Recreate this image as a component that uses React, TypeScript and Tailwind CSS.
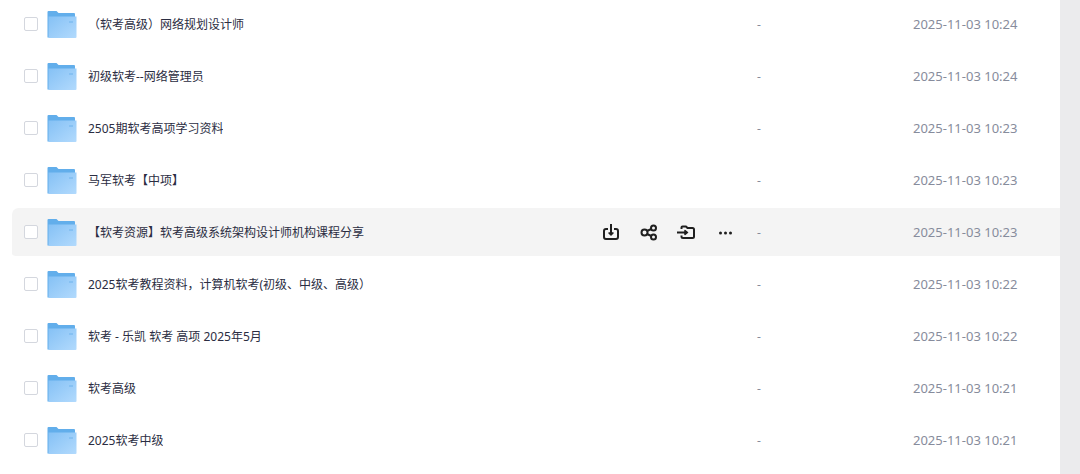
import { useState } from 'react';

interface FileItem {
    id: number
    name: string
    size: string
    date: string
}

const files: FileItem[] = [
    { id: 1, name: '（软考高级）网络规划设计师', size: '-', date: '2025-11-03 10:24' },
    { id: 2, name: '初级软考--网络管理员', size: '-', date: '2025-11-03 10:24' },
    { id: 3, name: '2505期软考高项学习资料', size: '-', date: '2025-11-03 10:23' },
    { id: 4, name: '马军软考【中项】', size: '-', date: '2025-11-03 10:23' },
    { id: 5, name: '【软考资源】软考高级系统架构设计师机构课程分享', size: '-', date: '2025-11-03 10:23' },
    { id: 6, name: '2025软考教程资料，计算机软考(初级、中级、高级）', size: '-', date: '2025-11-03 10:22' },
    { id: 7, name: '软考 - 乐凯 软考 高项 2025年5月', size: '-', date: '2025-11-03 10:22' },
    { id: 8, name: '软考高级', size: '-', date: '2025-11-03 10:21' },
    { id: 9, name: '2025软考中级', size: '-', date: '2025-11-03 10:21' },
];

function FolderIcon() {
    return (
        <svg className="h-7 w-[30px] shrink-0" viewBox="0 0 30 28" aria-hidden="true">
            <defs>
                <linearGradient id="folder-front" x1="0" y1="0" x2="1" y2="1">
                    <stop offset="0" stopColor="#85c1f5" />
                    <stop offset="1" stopColor="#b2dafd" />
                </linearGradient>
            </defs>
            <path d="M.5 2Q.5 1 1.5 1H9.500L11.500 3H27Q28 3 28 4V27.500H.5Z" fill="#62aeeb" />
            <path d="M1.500 6.500H29.500V27Q29.500 28 28.500 28H1.500Z" fill="url(#folder-front)" />
            <rect x="22" y="11" width="4" height="2" fill="#86c1f3" />
        </svg>
    )
}

function DownloadIcon() {
    return (
        <svg className="size-5" viewBox="0 0 20 20" fill="none" stroke="currentColor" strokeWidth="2" strokeLinejoin="round">
            <path d="M7 7H5Q3 7 3 9V15Q3 17 5 17H15Q17 17 17 15V9Q17 7 15 7H13" />
            <path d="M10 2V11" />
            <path d="M8 11H12L10 13Z" fill="currentColor" strokeWidth="1.5" />
        </svg>
    )
}

function ShareIcon() {
    return (
        <svg className="size-5" viewBox="0 0 20 20" fill="none" stroke="currentColor" strokeWidth="2">
            <circle cx="5.5" cy="10.5" r="3" />
            <circle cx="14.500" cy="6" r="2.500" />
            <circle cx="14.500" cy="15" r="2.500" />
            <path d="M8 9L12.300 7M8 12L12.300 14" />
        </svg>
    )
}

function MoveIcon() {
    return (
        <svg className="size-5" viewBox="0 0 20 20" fill="none" stroke="currentColor" strokeWidth="2" strokeLinejoin="round">
            <path d="M4.500 7V5.500Q4.500 4.500 5.500 4.500H9L10.500 6H15.500Q17 6 17 7.500V14.500Q17 16 15.500 16H6Q4.500 16 4.500 14.500V13.500" />
            <path d="M0 10.500H9" />
            <path d="M8 8.500V12.500L10.500 10.500Z" fill="currentColor" strokeWidth="1.5" />
        </svg>
    )
}

function MoreIcon() {
    return (
        <svg className="size-5" viewBox="0 0 20 20" fill="currentColor">
            <circle cx="5.5" cy="11" r="1.500" />
            <circle cx="10.500" cy="11" r="1.500" />
            <circle cx="15.500" cy="11" r="1.500" />
        </svg>
    )
}

interface FileRowProps {
    file: FileItem
    active: boolean
    onEnter: () => void
}

function FileRow({ file, active, onEnter }: FileRowProps) {
    const cell = `h-[52px] border-b-4 border-transparent bg-clip-padding p-0 ${active ? 'bg-[#f4f4f4]' : ''}`;

    return (
        <tr onMouseEnter={onEnter}>
            <td className={`${cell} rounded-l-md`}>
                <div className="flex items-center pl-3">
                    <input
                        id={`file-${file.id}`}
                        type="checkbox"
                        className="size-[14px] shrink-0 appearance-none rounded-xs border border-[#d4d7de] bg-white checked:bg-blue-500"
                    />
                    <label htmlFor={`file-${file.id}`} className="ml-[9px] flex min-w-0 items-center gap-[11px] text-[#2b2d42]">
                        <FolderIcon />
                        <span className="truncate pt-[2px]">{file.name}</span>
                    </label>
                    {active && (
                        <div className="mr-[22px] ml-auto flex gap-[18px] text-[#1f1f1f]">
                            <button type="button" aria-label="下载"><DownloadIcon /></button>
                            <button type="button" aria-label="分享"><ShareIcon /></button>
                            <button type="button" aria-label="移动"><MoveIcon /></button>
                            <button type="button" aria-label="更多"><MoreIcon /></button>
                        </div>
                    )}
                </div>
            </td>
            <td className={`${cell} text-[#878c9c]`}>
                <div className="pt-[2px]">{file.size}</div>
            </td>
            <td className={`${cell} text-[13px] text-[#878c9c]`}>
                <div className="pt-[2px]">{file.date}</div>
            </td>
        </tr>
    )
}

function App() {
    const [activeId, setActiveId] = useState(5);

    return (
        <div className="flex min-h-screen bg-[#ebebed] pr-5 font-['Noto_Sans','Noto_Sans_CJK_SC',sans-serif] text-xs">
            <main className="min-w-0 flex-1 bg-white pl-3">
                <table className="w-full table-fixed border-separate border-spacing-0">
                    <colgroup>
                        <col />
                        <col className="w-[156px]" />
                        <col className="w-[147px]" />
                    </colgroup>
                    <tbody>
                        {files.map(file => (
                            <FileRow
                                key={file.id}
                                file={file}
                                active={file.id === activeId}
                                onEnter={() => setActiveId(file.id)}
                            />
                        ))}
                    </tbody>
                </table>
            </main>
        </div>
    )
}

export default App
